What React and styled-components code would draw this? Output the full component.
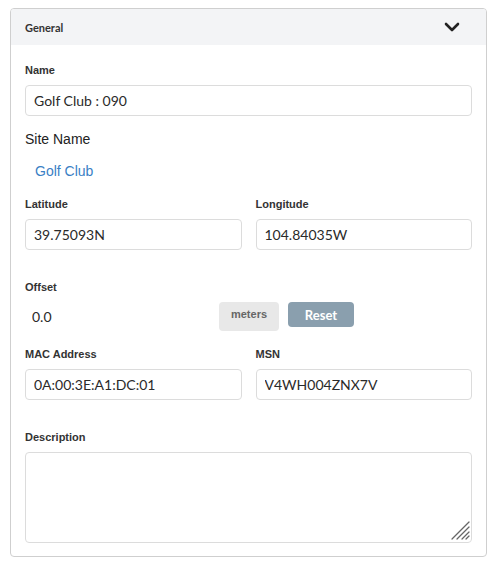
import styled, { createGlobalStyle } from 'styled-components';

const GlobalStyle = createGlobalStyle`
  body {
    margin: 0;
    padding: 8px 0 0 10px;
    background: #fff;
    font-family: "Liberation Sans", Arial, sans-serif;
  }
  * {
    box-sizing: border-box;
  }
`;

const Panel = styled.section`
  width: 477px;
  border: 1px solid #cfcfcf;
  border-radius: 4px;
  overflow: hidden;
`;

const Header = styled.div`
  height: 36px;
  display: flex;
  align-items: center;
  justify-content: space-between;
  padding: 0 26px 0 14px;
  background: #f3f4f6;
  font-family: Lato, "Liberation Sans", sans-serif;
  font-size: 11px;
  font-weight: 700;
  color: #333;
`;

const Body = styled.div`
  padding: 17px 14px 13px;
`;

const Label = styled.div`
  font-size: 11px;
  font-weight: 700;
  line-height: 16px;
  color: #333;
  margin-top: ${p => p.gap || 0}px;
  margin-bottom: 7px;
`;

const Input = styled.input`
  display: block;
  width: 100%;
  height: 31px;
  border: 1px solid #dcdcdc;
  border-radius: 4px;
  padding: 0 8px;
  font-family: Lato, "Liberation Sans", sans-serif;
  font-size: 14px;
  color: #2a2a2a;
  outline: none;
`;

const SiteTitle = styled.div`
  font-size: 14px;
  line-height: 18px;
  color: #222;
  margin-top: 14px;
`;

const SiteLink = styled.a`
  display: block;
  font-size: 14px;
  line-height: 18px;
  color: #3a7fc5;
  text-decoration: none;
  margin: 14px 0 0 10px;
`;

const Row = styled.div`
  display: grid;
  grid-template-columns: 1fr 1fr;
  column-gap: 14px;
  margin-top: ${p => p.gap || 0}px;
`;

const OffsetRow = styled.div`
  display: flex;
  align-items: flex-start;
`;

const OffsetInput = styled.input`
  width: 186px;
  height: 29px;
  border: none;
  padding: 0 7px;
  font-family: Lato, "Liberation Sans", sans-serif;
  font-size: 14px;
  color: #2a2a2a;
  outline: none;
  background: transparent;
`;

const Unit = styled.span`
  width: 60px;
  height: 29px;
  margin-left: 8px;
  border-radius: 4px;
  background: #e8e8e8;
  color: #666;
  font-size: 11px;
  font-weight: 700;
  text-align: center;
  line-height: 24px;
`;

const ResetButton = styled.button`
  width: 66px;
  height: 25px;
  margin-left: 9px;
  border: none;
  border-radius: 4px;
  background: #8a9fae;
  color: #fff;
  font-family: Lato, "Liberation Sans", sans-serif;
  font-size: 13px;
  font-weight: 700;
  padding: 0;
`;

const AreaWrap = styled.div`
  position: relative;
`;

const TextArea = styled.textarea`
  display: block;
  width: 100%;
  height: 91px;
  border: 1px solid #dcdcdc;
  border-radius: 4px;
  padding: 6px 8px;
  font-family: Lato, "Liberation Sans", sans-serif;
  font-size: 14px;
  outline: none;
  resize: none;
`;

const Grip = styled.svg`
  position: absolute;
  right: 2px;
  bottom: 3px;
  pointer-events: none;
`;

const Chevron = () => (
  <svg width="16" height="10" viewBox="0 0 16 10">
    <polyline points="2,2 8,8 14,2" fill="none" stroke="#222" strokeWidth="2.6" strokeLinecap="round" strokeLinejoin="round" />
  </svg>
);

const Field = ({ label, value }) => (
  <div>
    <Label>{label}</Label>
    <Input defaultValue={value} />
  </div>
);

export default function App() {
  return (
    <>
      <GlobalStyle />
      <Panel>
        <Header>
          <span>General</span>
          <Chevron />
        </Header>
        <Body>
          <Label>Name</Label>
          <Input defaultValue="Golf Club : 090" />
          <SiteTitle>Site Name</SiteTitle>
          <SiteLink href="#">Golf Club</SiteLink>
          <Row gap={16}>
            <Field label="Latitude" value="39.75093N" />
            <Field label="Longitude" value="104.84035W" />
          </Row>
          <Label gap={29}>Offset</Label>
          <OffsetRow>
            <OffsetInput defaultValue="0.0" />
            <Unit>meters</Unit>
            <ResetButton>Reset</ResetButton>
          </OffsetRow>
          <Row gap={15}>
            <Field label="MAC Address" value="0A:00:3E:A1:DC:01" />
            <Field label="MSN" value="V4WH004ZNX7V" />
          </Row>
          <Label gap={29}>Description</Label>
          <AreaWrap>
            <TextArea />
            <Grip width="19" height="19" viewBox="0 0 19 19">
              <g stroke="#666" strokeWidth="1.2" strokeLinecap="round">
                <line x1="1" y1="18" x2="18" y2="1" />
                <line x1="6" y1="18" x2="18" y2="6" />
                <line x1="11" y1="18" x2="18" y2="11" />
                <line x1="15" y1="18" x2="18" y2="15" />
              </g>
            </Grip>
          </AreaWrap>
        </Body>
      </Panel>
    </>
  );
}
